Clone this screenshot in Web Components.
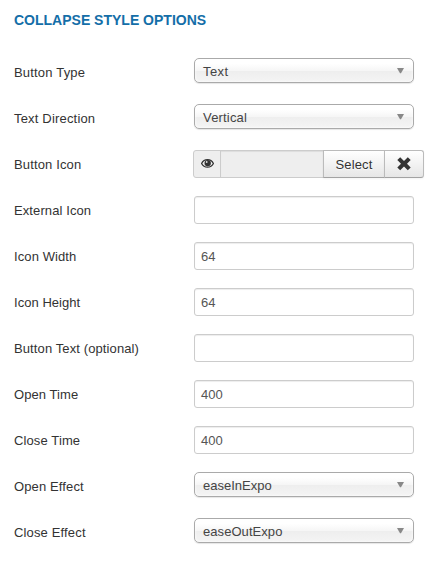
<!DOCTYPE html>
<html lang="en">
<head>
<meta charset="utf-8">
<title>Collapse Style Options</title>
<style>
html, body { margin: 0; background: #fff; }
body { font: 13px/18px "Liberation Sans", Arial, sans-serif; color: #333; }
</style>
</head>
<body>
<options-panel heading="COLLAPSE STYLE OPTIONS">
  <form-row label="Button Type" tracking=".18px"><select-box style="letter-spacing:.4px">Text</select-box></form-row>
  <form-row label="Text Direction" tracking=".18px"><select-box style="letter-spacing:.18px">Vertical</select-box></form-row>
  <form-row label="Button Icon" tracking=".14px"><media-field>Select</media-field></form-row>
  <form-row label="External Icon" tracking=".1px"><text-field></text-field></form-row>
  <form-row label="Icon Width" tracking=".1px"><text-field>64</text-field></form-row>
  <form-row label="Icon Height" tracking=".04px"><text-field>64</text-field></form-row>
  <form-row label="Button Text (optional)" tracking=".11px"><text-field></text-field></form-row>
  <form-row label="Open Time" tracking=".08px"><text-field>400</text-field></form-row>
  <form-row label="Close Time" tracking=".12px"><text-field>400</text-field></form-row>
  <form-row label="Open Effect" tracking=".13px"><select-box>easeInExpo</select-box></form-row>
  <form-row label="Close Effect" tracking=".15px"><select-box style="letter-spacing:.06px">easeOutExpo</select-box></form-row>
</options-panel>
<script>
const define = (name, html, setup) => customElements.define(name, class extends HTMLElement {
  constructor() {
    super();
    this.attachShadow({ mode: 'open' }).innerHTML = html;
  }
  connectedCallback() { if (setup) setup(this, this.shadowRoot); }
});

define('options-panel', `
<style>
:host { display: block; padding: 11px 14px 0; }
h2 { margin: 0 0 29px; font-size: 14px; line-height: 18px; font-weight: bold; color: #146ea8; white-space: nowrap; }
.rows { display: flex; flex-direction: column; gap: 18px; }
</style>
<h2></h2><div class="rows"><slot></slot></div>`,
(el, root) => { root.querySelector('h2').textContent = el.getAttribute('heading'); });

define('form-row', `
<style>
:host { display: grid; grid-template-columns: 180px 1fr; height: 28px; align-items: start; }
label { padding-top: 6px; white-space: nowrap; }
</style>
<label></label><slot></slot>`,
(el, root) => {
  const label = root.querySelector('label');
  label.textContent = el.getAttribute('label');
  label.style.letterSpacing = el.getAttribute('tracking');
});

define('text-field', `
<style>
:host { display: block; box-sizing: border-box; width: 220px; height: 28px; padding: 5px 6px 3px; border: 1px solid #ccc;
  border-radius: 3px; color: #555; background: #fff; box-shadow: inset 0 1px 1px rgba(0,0,0,.075); }
</style>
<slot></slot>`);

define('select-box', `
<style>
:host { display: flex; box-sizing: border-box; width: 220px; height: 25px; padding: 0 9px 0 8px; border: 1px solid #aaa;
  border-radius: 5px; color: #444; line-height: 26px; justify-content: space-between;
  background: linear-gradient(#fff 20%, #f6f6f6 50%, #eee 52%, #f4f4f4 100%) padding-box;
  box-shadow: inset 0 0 3px #fff, 0 1px 1px rgba(0,0,0,.1); }
span { height: 23px; }
svg { display: block; margin-top: 9px; }
</style>
<span><slot></slot></span>
<svg width="7" height="6" viewBox="0 0 7 6"><path d="M0 0h7L4 5.200H3z" fill="#888"/></svg>`);

define('media-field', `
<style>
:host { display: flex; width: 231px; height: 28px; margin-left: -1px; }
div { box-sizing: border-box; height: 28px; display: flex; align-items: center; justify-content: center; border: 1px solid #ccc; }
.eye { width: 28px; background: #eee; border-radius: 3px 0 0 3px; padding-bottom: 2px; }
.value { width: 104px; margin-left: -1px; background: #eee; box-shadow: inset 0 1px 1px rgba(0,0,0,.075); }
.btn { margin-left: -1px; border-color: #bbb #bbb #a2a2a2; background: linear-gradient(#fff, #e6e6e6);
  box-shadow: inset 0 1px 0 rgba(255,255,255,.2), 0 1px 2px rgba(0,0,0,.05); text-shadow: 0 1px 1px rgba(255,255,255,.75); }
.select { width: 62px; padding-top: 2px; letter-spacing: .15px; }
.clear { width: 40px; border-radius: 0 3px 3px 0; }
svg { display: block; }
</style>
<div class="eye"><svg width="13" height="9" viewBox="0 0 13 9">
<path d="M.6 4.500C2 1.700 4 .7 6.500 .7S11 1.700 12.400 4.500C11 7.200 9 8.200 6.500 8.200S2 7.200 .6 4.500z" fill="#eee" stroke="#333" stroke-width="1.300"/>
<circle cx="6.700" cy="4.100" r="3.200" fill="#333"/><circle cx="5.700" cy="3" r=".9" fill="#ddd"/></svg></div>
<div class="value"></div>
<div class="btn select"><slot></slot></div>
<div class="btn clear"><svg width="14" height="14" viewBox="0 0 14 14"><path d="M3.200 .2 7 3.900 10.800 .2 13.700 3.100 10 6.700 13.700 10.400 10.800 13.300 7 9.600 3.200 13.300 .3 10.400 4 6.700 .3 3.100z" fill="#333"/></svg></div>`);
</script>
</body>
</html>
